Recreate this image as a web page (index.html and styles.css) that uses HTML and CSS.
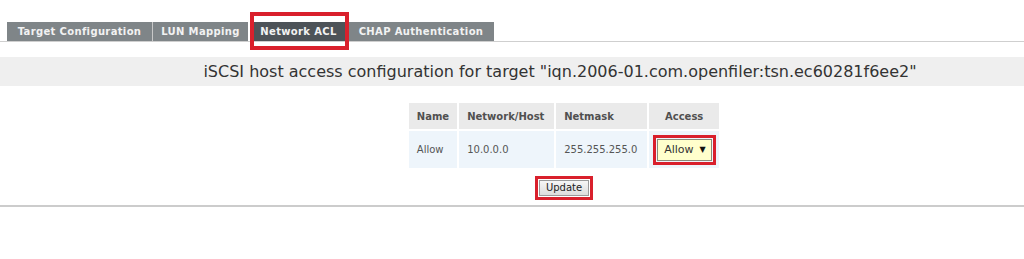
FILE: index.html
```html
<!DOCTYPE html>
<html>
<head>
<meta charset="utf-8">
<link rel="stylesheet" href="styles.css">
</head>
<body>
<div class="tabs">
  <div class="tab tab-target">Target Configuration</div>
  <div class="tab tab-lun">LUN Mapping</div>
  <div class="tab tab-acl tab-active">Network ACL</div>
  <div class="tab tab-chap">CHAP Authentication</div>
</div>
<div class="band">
  <div class="band-text">iSCSI host access configuration for target "iqn.2006-01.com.openfiler:tsn.ec60281f6ee2"</div>
</div>
<div class="content">
  <table class="acl">
    <tr>
      <th class="c-name">Name</th>
      <th class="c-net">Network/Host</th>
      <th class="c-mask">Netmask</th>
      <th class="c-access">Access</th>
    </tr>
    <tr>
      <td>Allow</td>
      <td>10.0.0.0</td>
      <td>255.255.255.0</td>
      <td class="c-access"><span class="select">Allow<span class="arrow">▼</span></span></td>
    </tr>
  </table>
  <div class="actions"><span class="btn">Update</span></div>
</div>
<div class="rule"></div>
</body>
</html>
```
FILE: styles.css
```css
html, body {
  margin: 0;
  padding: 0;
  background: #ffffff;
  font-family: "DejaVu Sans", Verdana, sans-serif;
}
.tabs {
  display: flex;
  padding: 22px 0 0 7px;
  border-bottom: 1px solid #cfcfcf;
}
.tab {
  height: 19px;
  line-height: 19px;
  background: #7f8588;
  color: #f2f2f2;
  font-size: 10px;
  font-weight: bold;
  letter-spacing: 0.35px;
  text-align: center;
  white-space: nowrap;
}
.tab-target { width: 145px; border-right: 1px solid #c8c8c8; }
.tab-lun { width: 95px; margin-right: 3px; }
.tab-acl { width: 95px; margin-right: 2px; }
.tab-chap { width: 146px; }
.tab-active {
  position: relative;
  background: #4d5358;
}
.tab-active::after {
  content: "";
  position: absolute;
  top: -10px;
  bottom: -9px;
  left: -1px;
  right: -3px;
  border: 4px solid #d9202c;
}
.band {
  margin-top: 15px;
  height: 29px;
  background: #efefef;
  display: flex;
  align-items: center;
  justify-content: center;
  padding-left: 96px;
}
.band-text {
  font-size: 16px;
  color: #333333;
  white-space: nowrap;
}
.content {
  padding-left: 104px;
  display: flex;
  flex-direction: column;
  align-items: center;
}
.acl {
  margin-top: 15px;
  border-spacing: 2px;
  font-size: 10px;
  color: #555555;
}
.acl th {
  height: 26px;
  padding: 0 8px;
  background: #eaeaea;
  font-weight: bold;
  text-align: left;
  color: #505050;
}
.acl th.c-access { text-align: center; padding: 0; width: 70px; }
.acl td {
  height: 37px;
  padding: 0 8px;
  background: #eef5fb;
}
.acl td.c-access { padding: 0 0 0 8px; }
.c-name { width: 32px; }
.c-net { width: 79px; }
.c-mask { width: 75px; }
.select {
  display: inline-flex;
  align-items: center;
  height: 20px;
  padding: 0 5px 0 6px;
  background: #ffffcc;
  border: 1px solid #8a8a7a;
  color: #333333;
  font-weight: normal;
  font-size: 11px;
  outline: 3px solid #d9202c;
  outline-offset: 1px;
}
.arrow {
  font-size: 8px;
  margin-left: 6px;
  color: #111111;
}
.actions {
  margin-top: 10px;
  display: flex;
}
.btn {
  display: inline-block;
  height: 14px;
  line-height: 14px;
  padding: 0 6px;
  font-size: 10px;
  color: #222222;
  background: linear-gradient(#f6f6f6, #dddddd);
  border: 1px solid #9a9a9a;
  outline: 3px solid #d9202c;
  outline-offset: 1px;
}
.rule {
  margin-top: 9px;
  height: 2px;
  background: #cccccc;
}
```
